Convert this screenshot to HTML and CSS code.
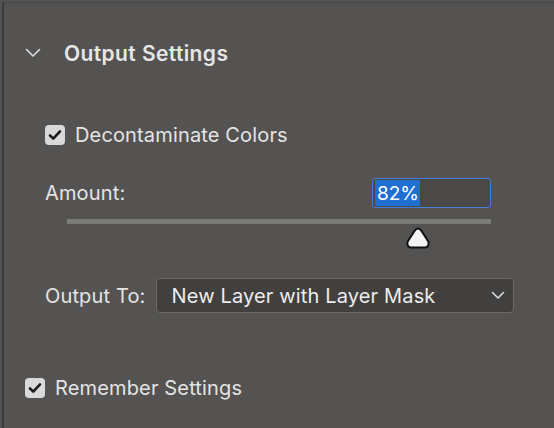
FILE: index.html
```html
<!DOCTYPE html>
<html>
<head>
<meta charset="utf-8">
<link rel="stylesheet" href="styles.css">
</head>
<body>
<div class="panel">
  <div class="header">
    <svg class="chev" width="16" height="10" viewBox="0 0 16 10"><path d="M1.5 1.5 L8 8 L14.5 1.5" fill="none" stroke="#dcdcdc" stroke-width="1.6" stroke-linecap="round" stroke-linejoin="round"/></svg>
    <span class="title">Output Settings</span>
  </div>
  <div class="section">
    <label class="check-row">
      <span class="box"><svg width="14" height="12" viewBox="0 0 14 12"><path d="M2 6.5 L5.3 9.6 L12 2.4" fill="none" stroke="#1c1c1c" stroke-width="2.6" stroke-linecap="round" stroke-linejoin="round"/></svg></span>
      <span class="label">Decontaminate Colors</span>
    </label>
    <div class="amount-row">
      <span class="label">Amount:</span>
      <div class="input"><span class="sel">82%</span></div>
    </div>
    <div class="slider">
      <div class="track"></div>
      <svg class="thumb" width="26" height="24" viewBox="0 0 26 24"><path d="M13 2.5 C11.5 2.5 10.5 3.5 9.5 5 L3 15 C1.5 17.5 2.5 21.5 6 21.5 L20 21.5 C23.5 21.5 24.5 17.5 23 15 L16.5 5 C15.5 3.5 14.5 2.5 13 2.5 Z" fill="#f4f4f4" stroke="#111" stroke-width="2"/></svg>
    </div>
    <div class="output-row">
      <span class="label">Output To:</span>
      <div class="select">
        <span class="sel-text">New Layer with Layer Mask</span>
        <svg width="14" height="9" viewBox="0 0 14 9"><path d="M1.5 1.5 L7 7 L12.5 1.5" fill="none" stroke="#dcdcdc" stroke-width="1.6" stroke-linecap="round" stroke-linejoin="round"/></svg>
      </div>
    </div>
  </div>
  <label class="check-row remember">
    <span class="box"><svg width="14" height="12" viewBox="0 0 14 12"><path d="M2 6.5 L5.3 9.6 L12 2.4" fill="none" stroke="#1c1c1c" stroke-width="2.6" stroke-linecap="round" stroke-linejoin="round"/></svg></span>
    <span class="label">Remember Settings</span>
  </label>
</div>
</body>
</html>
```
FILE: styles.css
```css
html, body {
  margin: 0;
  padding: 0;
  background: #545352;
  width: 554px;
  height: 428px;
  overflow: hidden;
}
body {
  font-family: Inter, "Open Sans", sans-serif;
  color: #e2e2e2;
}
.panel {
  margin: 2px 0 0 2px;
  border-left: 2px solid #3a3a3a;
  border-top: 1px solid #474646;
  height: 426px;
  box-sizing: border-box;
  display: flex;
  flex-direction: column;
}
.header {
  display: flex;
  align-items: center;
  height: 24px;
  margin-top: 38px;
  padding-left: 21px;
}
.chev {
  margin-right: 23px;
}
.title {
  font-size: 21px;
  font-weight: 600;
  letter-spacing: 0.4px;
  color: #e6e6e6;
}
.section {
  padding-left: 41px;
  padding-right: 40px;
  display: flex;
  flex-direction: column;
}
.check-row {
  display: flex;
  align-items: center;
  height: 24px;
}
.section .check-row {
  margin-top: 58px;
}
.box {
  width: 20px;
  height: 20px;
  border-radius: 4px;
  background: #d9d9d9;
  display: flex;
  align-items: center;
  justify-content: center;
  margin-right: 10px;
  flex: none;
}
.label {
  font-size: 20px;
  letter-spacing: 0.15px;
  color: #e4e4e4;
}
.amount-row {
  display: flex;
  align-items: center;
  justify-content: space-between;
  margin-top: 31px;
  height: 30px;
}
.input {
  width: 119px;
  height: 30px;
  box-sizing: border-box;
  border: 1.5px solid #3f7fd6;
  border-radius: 3px;
  background: #4a4948;
  padding: 1px 2px;
  display: flex;
  align-items: stretch;
  margin-right: 23px;
}
.sel {
  background: #1f6fd0;
  color: #fff;
  font-size: 19px;
  display: flex;
  align-items: center;
  padding: 0 1px 0 2px;
}
.slider {
  position: relative;
  height: 38px;
  margin-top: 11px;
  padding-left: 22px;
  padding-right: 23px;
}
.track {
  height: 5px;
  background: #7b7b7a;
}
.thumb {
  position: absolute;
  left: 360px;
  top: 7px;
}
.output-row {
  display: flex;
  align-items: center;
  margin-top: 21px;
}
.select {
  margin-left: 10px;
  width: 358px;
  height: 35px;
  box-sizing: border-box;
  border: 1px solid #6c6b6a;
  border-radius: 4px;
  background: #41403f;
  display: flex;
  align-items: center;
  justify-content: space-between;
  padding: 0 8px 0 15px;
}
.sel-text {
  font-size: 20px;
  letter-spacing: 0.15px;
  color: #ececec;
}
.remember {
  margin-top: 63px;
  padding-left: 21px;
}
```
